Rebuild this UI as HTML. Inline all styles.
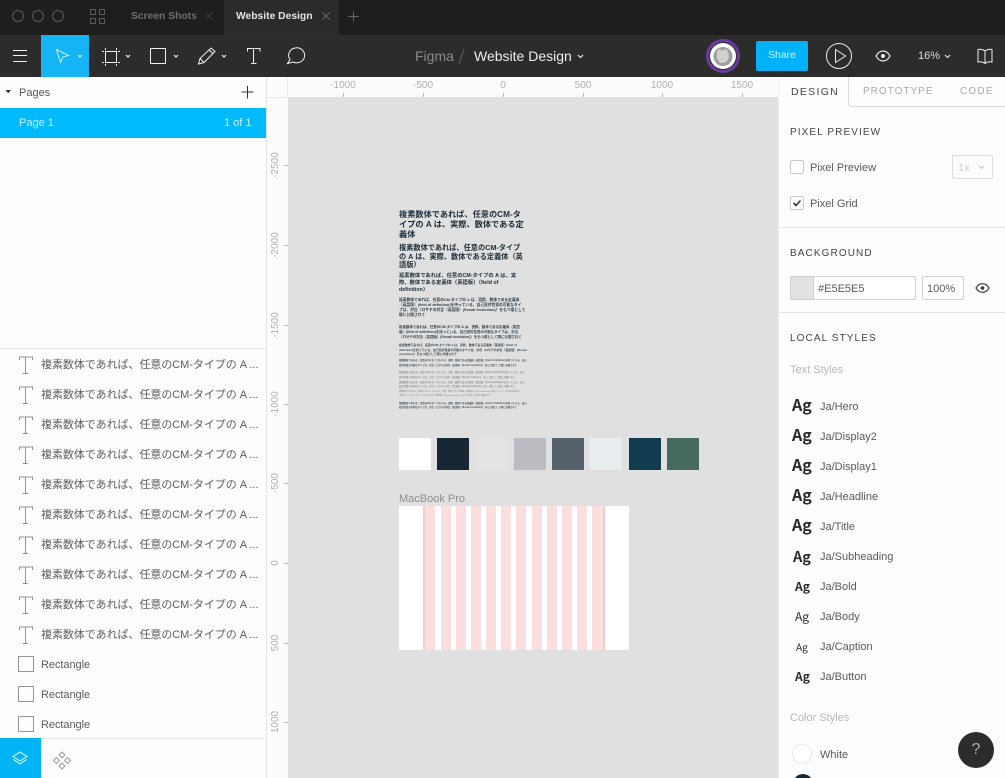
<!DOCTYPE html>
<html><head><meta charset="utf-8"><style>
*{box-sizing:border-box}
html,body{margin:0;padding:0;width:1005px;height:778px;overflow:hidden;background:#e0e0e0}
body{position:relative;font-family:"Liberation Sans","Noto Sans CJK JP",sans-serif;color:#444}
.a,.t{position:absolute}
.t{white-space:nowrap;line-height:14px;height:14px}
svg{position:absolute;overflow:visible}
.rx{position:absolute;top:80px;font-size:10px;line-height:12px;color:#b0b0b0;width:50px;text-align:center}
.tx{position:absolute;top:93px;width:1px;height:4px;background:#b4b4b4}
.ry{position:absolute;left:251px;width:50px;height:12px;font-size:10px;line-height:12px;color:#b0b0b0;text-align:center;transform:rotate(-90deg)}
.ty{position:absolute;left:284px;width:4px;height:1px;background:#b4b4b4}
.l{position:absolute;left:41px;font-size:11px;line-height:14px;height:14px;color:#5c5c5c;white-space:nowrap;letter-spacing:-.05px}
.c{position:absolute;left:399px;white-space:pre;color:#1d2c38;font-family:"Liberation Sans","Noto Sans CJK JP",sans-serif}
.sw{position:absolute;top:438px;width:32px;height:32px}
.p{position:absolute;top:506px;height:144px;background:#fbdfdf}
.n{position:absolute;left:820px;font-size:11px;line-height:14px;color:#5a5a5a;white-space:nowrap}
.g{position:absolute;font-family:"Noto Sans CJK JP","Liberation Sans",sans-serif;font-weight:700;color:#2a2a2a;line-height:20px;height:20px;white-space:nowrap}
.h{position:absolute;left:790px;font-size:10px;letter-spacing:1.1px;line-height:14px;color:#444;white-space:nowrap}
</style></head><body>

<!-- title bar -->
<div class="a" style="left:0;top:0;width:1005px;height:35px;background:#1e1e1e"></div>
<div class="a" style="left:224px;top:0;width:115px;height:35px;background:#2b2b2b"></div>
<svg style="left:0;top:0" width="120" height="35" fill="none" stroke="#5a5a5a" stroke-width="1">
<circle cx="18" cy="16" r="5.5"/><circle cx="38" cy="16" r="5.5"/><circle cx="58" cy="16" r="5.5"/>
<rect x="90.5" y="9.5" width="5" height="5"/><rect x="99.5" y="9.5" width="5" height="5"/><rect x="90.5" y="18.5" width="5" height="5"/><rect x="99.5" y="18.5" width="5" height="5"/>
</svg>
<div class="t" style="left:131px;top:10px;font-size:10.3px;font-weight:700;color:#6e6e6e">Screen Shots</div>
<div class="t" style="left:236px;top:10px;font-size:10.3px;font-weight:700;color:#e4e4e4">Website Design</div>
<svg style="left:0;top:0" width="400" height="35" fill="none" stroke-width="1">
<path d="M205.500 12.500l7 7m0-7l-7 7" stroke="#3c3c3c"/>
<path d="M322.500 12.500l7 7m0-7l-7 7" stroke="#6a6a6a"/>
<path d="M353.500 11.500v10m-5-5h10" stroke="#666"/>
</svg>

<!-- toolbar -->
<div class="a" style="left:0;top:35px;width:1005px;height:42px;background:#2c2c2c"></div>
<div class="a" style="left:41px;top:35px;width:48px;height:42px;background:#14b4f5"></div>
<svg style="left:0;top:0" width="340" height="78" fill="none" stroke="#f0f0f0" stroke-width="1">
<path d="M13 50.500h14M13 55.500h14M13 61.500h14"/>
<path d="M56.500 49.500l12 6-5.500 1.500-2.500 5.500z" stroke="#c8f2ff"/>
<path d="M78 55l2 2 2-2" stroke="#c8f2ff" stroke-width="1.200"/>
<rect x="105.500" y="51.500" width="11" height="11"/>
<path d="M105.500 48v2M116.500 48v2M105.500 64v2M116.500 64v2M102 51.500h2M102 62.500h2M118 51.500h2M118 62.500h2" stroke-width="1"/>
<path d="M126 55l2 2 2-2" stroke-width="1.200"/>
<rect x="150.500" y="48.500" width="15" height="15"/>
<path d="M174 55l2 2 2-2" stroke-width="1.200"/>
<path d="M198.500 64l1.500-5.500 11-10.500 4 3.500-11 11z M209 50l4 3.500 M200 58.500l3.500 3.500"/>
<path d="M222 55l2 2 2-2" stroke-width="1.200"/>
<path d="M247.500 51.500v-3h12.500v3M253.500 48.500v15M251 63.500h5.500"/>
<path d="M287.500 63.500l2.500-4a8 7.500 0 1 1 3 2.500z"/>
</svg>
<div class="t" style="left:415px;top:49px;font-size:14px;color:#8a8a8a">Figma</div>
<svg style="left:0;top:0" width="600" height="78" fill="none">
<path d="M459 64l5-15" stroke="#5f5f5f"/>
<path d="M578 55l2.500 2.500 2.500-2.500" stroke="#e8e8e8" stroke-width="1.200"/>
</svg>
<div class="t" style="left:474px;top:49px;font-size:14px;color:#ececec">Website Design</div>

<svg style="left:700px;top:35px" width="305" height="42" fill="none">
<circle cx="23" cy="21" r="15.500" stroke="#6a3ba0" stroke-width="3"/>
<circle cx="23" cy="21" r="13" fill="#fff"/>
<circle cx="23" cy="21.500" r="9.500" fill="#9d9d9d"/>
<path d="M17 17l2-3 3 1.500 4-1.500 2.500 3.500 .5 5-3 5-6 .5-3.500-5z" fill="#d0d0d0"/>
<circle cx="139" cy="21" r="12.500" stroke="#e8e8e8"/>
<path d="M135.500 14.500v13l10-6.500z" stroke="#e8e8e8"/>
<path d="M176 21c2-3.500 4.500-5 7-5s5 1.500 7 5c-2 3.500-4.500 5-7 5s-5-1.500-7-5z" stroke="#eee" stroke-width="1.200"/>
<circle cx="183" cy="21" r="2" fill="#eee"/>
<path d="M245 20l2.500 2.500 2.500-2.500" stroke="#ddd" stroke-width="1.200"/>
<path d="M285 16c-2-1.500-5-2-7-1.500v12.500c2-.5 5 0 7 1.500 2-1.500 5-2 7-1.500V14.500c-2-.5-5 0-7 1.500zM285 16v12" stroke="#eee"/>
</svg>
<div class="a" style="left:756px;top:41px;width:52px;height:30px;border-radius:2px;background:#00b2fa;color:#d4f3ff;font-size:10.5px;line-height:29px;text-align:center">Share</div>
<div class="t" style="left:918px;top:49px;font-size:11px;color:#ddd">16%</div>

<!-- left panel -->
<div class="a" style="left:0;top:77px;width:267px;height:701px;background:#fdfdfd;border-right:1px solid #e6e6e6"></div>
<svg style="left:0;top:77px" width="266" height="30" fill="none">
<path d="M5.500 13h5.500l-2.750 3.200z" fill="#333"/>
<path d="M247.500 9v12.500M241.500 15h12" stroke="#333"/>
</svg>
<div class="t" style="left:19px;top:86px;font-size:11px;color:#555">Pages</div>
<div class="a" style="left:0;top:108px;width:266px;height:30px;background:#00bafd"></div>
<div class="t" style="left:19px;top:116px;font-size:11px;color:#cdf1ff">Page 1</div>
<div class="t" style="left:224px;top:116px;font-size:11px;color:#cdf1ff">1 of 1</div>
<div class="a" style="left:0;top:348px;width:266px;height:1px;background:#e3e3e3"></div>

<svg style="left:0;top:349px" width="40" height="390" fill="none" stroke="#949494" stroke-width="1">
<path d="M19.500 11v-3h13v3M25.500 8v16M23 24.500h5"/>
<path d="M19.500 41v-3h13v3M25.500 38v16M23 54.500h5"/>
<path d="M19.500 71v-3h13v3M25.500 68v16M23 84.500h5"/>
<path d="M19.500 101v-3h13v3M25.500 98v16M23 114.500h5"/>
<path d="M19.500 131v-3h13v3M25.500 128v16M23 144.500h5"/>
<path d="M19.500 161v-3h13v3M25.500 158v16M23 174.500h5"/>
<path d="M19.500 191v-3h13v3M25.500 188v16M23 204.500h5"/>
<path d="M19.500 221v-3h13v3M25.500 218v16M23 234.500h5"/>
<path d="M19.500 251v-3h13v3M25.500 248v16M23 264.500h5"/>
<path d="M19.500 281v-3h13v3M25.500 278v16M23 294.500h5"/>
<rect x="18.500" y="307.500" width="15" height="15"/>
<rect x="18.500" y="337.500" width="15" height="15"/>
<rect x="18.500" y="367.500" width="15" height="15"/>
</svg>
<div class="l" style="top:358px">複素数体であれば、任意のCM-タイプの A ...</div>
<div class="l" style="top:388px">複素数体であれば、任意のCM-タイプの A ...</div>
<div class="l" style="top:418px">複素数体であれば、任意のCM-タイプの A ...</div>
<div class="l" style="top:448px">複素数体であれば、任意のCM-タイプの A ...</div>
<div class="l" style="top:478px">複素数体であれば、任意のCM-タイプの A ...</div>
<div class="l" style="top:508px">複素数体であれば、任意のCM-タイプの A ...</div>
<div class="l" style="top:538px">複素数体であれば、任意のCM-タイプの A ...</div>
<div class="l" style="top:568px">複素数体であれば、任意のCM-タイプの A ...</div>
<div class="l" style="top:598px">複素数体であれば、任意のCM-タイプの A ...</div>
<div class="l" style="top:628px">複素数体であれば、任意のCM-タイプの A ...</div>
<div class="l" style="top:658px">Rectangle</div>
<div class="l" style="top:688px">Rectangle</div>
<div class="l" style="top:718px">Rectangle</div>

<div class="a" style="left:0;top:738px;width:266px;height:40px;background:#fdfdfd;border-top:1px solid #e3e3e3"></div>
<div class="a" style="left:0;top:738px;width:41px;height:40px;background:#00b4f5"></div>
<svg style="left:0;top:738px" width="90" height="40" fill="none">
<path d="M20 14l7 4.500-7 4.500-7-4.500z" stroke="#d0f4ff" stroke-width="1.100"/>
<path d="M13.500 21.500l6.500 4.500 6.500-4.500" stroke="#d0f4ff" stroke-width="1.100"/>
<path d="M62 14l3 3-3 3-3-3zM56.500 19.500l3 3-3 3-3-3zM67.500 19.500l3 3-3 3-3-3zM62 25l3 3-3 3-3-3z" stroke="#9a9a9a"/>
</svg>

<!-- rulers -->
<div class="a" style="left:267px;top:77px;width:511px;height:20px;background:#fcfcfc"></div>
<div class="a" style="left:267px;top:97px;width:21px;height:681px;background:#fcfcfc"></div>
<div class="a" style="left:287px;top:77px;width:1px;height:20px;background:#eaeaea"></div>
<div class="a" style="left:267px;top:97px;width:21px;height:1px;background:#eaeaea"></div>
<div class="rx" style="left:318px">-1000</div><div class="tx" style="left:343px"></div>
<div class="rx" style="left:398px">-500</div><div class="tx" style="left:423px"></div>
<div class="rx" style="left:478px">0</div><div class="tx" style="left:503px"></div>
<div class="rx" style="left:558px">500</div><div class="tx" style="left:583px"></div>
<div class="rx" style="left:637px">1000</div><div class="tx" style="left:662px"></div>
<div class="rx" style="left:717px">1500</div><div class="tx" style="left:742px"></div>
<div class="ry" style="top:159px">-2500</div><div class="ty" style="top:165px"></div>
<div class="ry" style="top:239px">-2000</div><div class="ty" style="top:245px"></div>
<div class="ry" style="top:319px">-1500</div><div class="ty" style="top:325px"></div>
<div class="ry" style="top:398px">-1000</div><div class="ty" style="top:404px"></div>
<div class="ry" style="top:477px">-500</div><div class="ty" style="top:483px"></div>
<div class="ry" style="top:557px">0</div><div class="ty" style="top:563px"></div>
<div class="ry" style="top:637px">500</div><div class="ty" style="top:643px"></div>
<div class="ry" style="top:716px">1000</div><div class="ty" style="top:722px"></div>

<!-- canvas text -->
<div class="c" style="top:210px;font-size:8.200px;font-weight:700;line-height:10px">複素数体であれば、任意のCM-タ
イプの A は、実際、数体である定
義体</div>
<div class="c" style="top:244px;font-size:7.200px;font-weight:700;line-height:8.500px">複素数体であれば、任意のCM-タイプ
の A は、実際、数体である定義体（英
語版）</div>
<div class="c" style="top:272.500px;font-size:5.300px;font-weight:700;line-height:7px">複素数体であれば、任意のCM-タイプの A は、実
際、数体である定義体（英語版）（field of
definition）</div>
<div class="c" style="top:297.500px;font-size:3.750px;font-weight:700;line-height:5.300px;color:#33414c">複素数体であれば、任意のCM-タイプの A は、実際、数体である定義体
（英語版）(field of definition)を持っている。自己双対性質の可能なタイ
プは、対合（ロサチの対合（英語版）(Rosati involution)）をもつ環として
既に分類されて</div>
<div class="c" style="top:324.500px;font-size:3.450px;font-weight:700;line-height:5.300px;color:#33414c">複素数体であれば、任意のCM-タイプの A は、実際、数体である定義体（英語
版）(field of definition)を持っている。自己双対性質の可能なタイプは、対合
（ロサチの対合（英語版）(Rosati involution)）をもつ環として既に分類されて</div>
<div class="c" style="top:343px;font-size:2.900px;font-weight:700;line-height:4.700px;color:#3d4a55">複素数体であれば、任意のCM-タイプの A は、実際、数体である定義体（英語版）(field of
definition)を持っている。自己双対性質の可能なタイプは、対合（ロサチの対合（英語版）(Rosati
involution)）をもつ環として既に分類されて</div>
<div class="c" style="top:359px;font-size:2.350px;font-weight:700;line-height:4.800px;color:#4a5660">複素数体であれば、任意のCM-タイプの A は、実際、数体である定義体（英語版）(field of definition)を持っている。自己
双対性質の可能なタイプは、対合（ロサチの対合（英語版）(Rosati involution)）をもつ環として既に分類されて</div>
<div class="c" style="top:371px;font-size:2.350px;line-height:4.800px;color:#65707a">複素数体であれば、任意のCM-タイプの A は、実際、数体である定義体（英語版）(field of definition)を持っている。自己
双対性質の可能なタイプは、対合（ロサチの対合（英語版）(Rosati involution)）をもつ環として既に分類されて
複素数体であれば、任意のCM-タイプの A は、実際、数体である定義体（英語版）(field of definition)を持っている。自己
双対性質の可能なタイプは、対合（ロサチの対合（英語版）(Rosati involution)）をもつ環として既に分類されて</div>
<div class="c" style="top:391px;font-size:2.050px;line-height:3.800px;color:#7b848c">複素数体であれば、任意のCM-タイプの A は、実際、数体である定義体（英語版）(field of definition)を持っている。自己双対性質の
可能なタイプは、対合（ロサチの対合（英語版）(Rosati involution)）をもつ環として既に分類されて</div>
<div class="c" style="top:402px;font-size:2.350px;font-weight:700;line-height:4.300px;color:#4a5660">複素数体であれば、任意のCM-タイプの A は、実際、数体である定義体（英語版）(field of definition)を持っている。自己
双対性質の可能なタイプは、対合（ロサチの対合（英語版）(Rosati involution)）をもつ環として既に分類されて</div>

<!-- swatches -->
<div class="sw" style="left:399px;background:#fff"></div>
<div class="sw" style="left:437px;background:#162633"></div>
<div class="sw" style="left:476px;background:#e4e4e4"></div>
<div class="sw" style="left:514px;background:#babcc1"></div>
<div class="sw" style="left:552px;background:#56626b"></div>
<div class="sw" style="left:590px;background:#e8edf0"></div>
<div class="sw" style="left:629px;background:#113c50"></div>
<div class="sw" style="left:667px;background:#456b60"></div>

<div class="t" style="left:399px;top:492px;font-size:11px;color:#8e8e8e">MacBook Pro</div>
<div class="a" style="left:399px;top:506px;width:230px;height:144px;background:#fff"></div>
<div class="p" style="left:423px;width:12px;border-left:2px solid #f5cccc"></div>
<div class="p" style="left:441px;width:10px"></div>
<div class="p" style="left:456px;width:10px"></div>
<div class="p" style="left:471px;width:10px"></div>
<div class="p" style="left:486px;width:10px"></div>
<div class="p" style="left:501px;width:10px"></div>
<div class="p" style="left:516px;width:10px"></div>
<div class="p" style="left:532px;width:10px"></div>
<div class="p" style="left:547px;width:10px"></div>
<div class="p" style="left:562px;width:10px"></div>
<div class="p" style="left:577px;width:10px"></div>
<div class="p" style="left:592px;width:13px;border-right:2px solid #f5cccc"></div>

<!-- right panel -->
<div class="a" style="left:778px;top:77px;width:227px;height:701px;background:#fdfdfd;border-left:1px solid #efefef"></div>
<div class="a" style="left:848px;top:77px;width:170px;height:30px;border-left:1px solid #d8d8d8;border-bottom:1px solid #d8d8d8;border-bottom-left-radius:3px"></div>
<div class="t" style="left:791px;top:85px;font-size:10.500px;letter-spacing:1.300px;color:#444">DESIGN</div>
<div class="t" style="left:863px;top:85px;font-size:10px;letter-spacing:1px;color:#aaa">PROTOTYPE</div>
<div class="t" style="left:960px;top:85px;font-size:10px;letter-spacing:1.200px;color:#aaa">CODE</div>

<div class="h" style="top:126px">PIXEL PREVIEW</div>
<div class="a" style="left:790px;top:160px;width:14px;height:14px;border:1px solid #cacaca;border-radius:2px;background:#fff"></div>
<div class="n" style="left:810px;top:161px">Pixel Preview</div>
<div class="a" style="left:952px;top:155px;width:41px;height:24px;border:1px solid #dcdcdc;border-radius:2px"></div>
<div class="t" style="left:958px;top:161px;font-size:11px;color:#ccc">1x</div>
<svg style="left:975px;top:160px" width="14" height="14" fill="none"><path d="M4 6l2.500 2.500L9 6" stroke="#ccc" stroke-width="1.200"/></svg>
<div class="a" style="left:790px;top:196px;width:14px;height:14px;border:1px solid #cacaca;border-radius:2px;background:#fff"></div>
<svg style="left:790px;top:196px" width="14" height="14" fill="none"><path d="M3.500 7l2.500 2.500 4.500-5" stroke="#333" stroke-width="1.600"/></svg>
<div class="n" style="left:810px;top:197px">Pixel Grid</div>
<div class="a" style="left:779px;top:227px;width:226px;height:1px;background:#e6e6e6"></div>

<div class="h" style="top:247px">BACKGROUND</div>
<div class="a" style="left:790px;top:276px;width:126px;height:24px;border:1px solid #d4d4d4;border-radius:2px;background:#fff"></div>
<div class="a" style="left:790px;top:276px;width:24px;height:24px;border:1px solid #d0d0d0;border-radius:2px 0 0 2px;background:#e2e2e2"></div>
<div class="n" style="left:818px;top:282px">#E5E5E5</div>
<div class="a" style="left:922px;top:276px;width:42px;height:24px;border:1px solid #d4d4d4;border-radius:2px;background:#fff"></div>
<div class="n" style="left:927px;top:282px">100%</div>
<svg style="left:975px;top:281px" width="16" height="14" fill="none">
<path d="M1 7c1.800-3 4-4.300 6.500-4.300S12.300 4 14 7c-1.700 3-4 4.300-6.500 4.300S2.800 10 1 7z" stroke="#333" stroke-width="1.200"/>
<circle cx="7.500" cy="7" r="1.800" fill="#333"/></svg>
<div class="a" style="left:779px;top:312px;width:226px;height:1px;background:#e6e6e6"></div>

<div class="h" style="top:332px">LOCAL STYLES</div>
<div class="n" style="left:790px;top:363px;color:#b8b8b8">Text Styles</div>

<div class="g" style="left:792px;top:394px;font-size:16px">Ag</div><div class="n" style="top:400px">Ja/Hero</div>
<div class="g" style="left:792px;top:424px;font-size:16px">Ag</div><div class="n" style="top:430px">Ja/Display2</div>
<div class="g" style="left:792px;top:454px;font-size:16px">Ag</div><div class="n" style="top:460px">Ja/Display1</div>
<div class="g" style="left:792px;top:484px;font-size:16px">Ag</div><div class="n" style="top:490px">Ja/Headline</div>
<div class="g" style="left:792px;top:514px;font-size:16px">Ag</div><div class="n" style="top:520px">Ja/Title</div>
<div class="g" style="left:793px;top:547px;font-size:14.500px">Ag</div><div class="n" style="top:550px">Ja/Subheading</div>
<div class="g" style="left:795px;top:577px;font-size:12px">Ag</div><div class="n" style="top:580px">Ja/Bold</div>
<div class="g" style="left:795px;top:607px;font-size:12px;font-weight:400">Ag</div><div class="n" style="top:610px">Ja/Body</div>
<div class="g" style="left:796px;top:637px;font-size:10px;font-weight:400">Ag</div><div class="n" style="top:640px">Ja/Caption</div>
<div class="g" style="left:795px;top:667px;font-size:12px">Ag</div><div class="n" style="top:670px">Ja/Button</div>

<div class="n" style="left:790px;top:711px;color:#b8b8b8">Color Styles</div>
<div class="a" style="left:792px;top:744px;width:20px;height:20px;border-radius:50%;background:#fff;border:1px solid #e8e8e8"></div>
<div class="n" style="top:748px">White</div>
<div class="a" style="left:793px;top:774px;width:20px;height:20px;border-radius:50%;background:#162633"></div>
<div class="a" style="left:958px;top:732px;width:36px;height:36px;border-radius:50%;background:#2c2c2c;color:#b0b0b0;font-size:16px;line-height:36px;text-align:center">?</div>
</body></html>
